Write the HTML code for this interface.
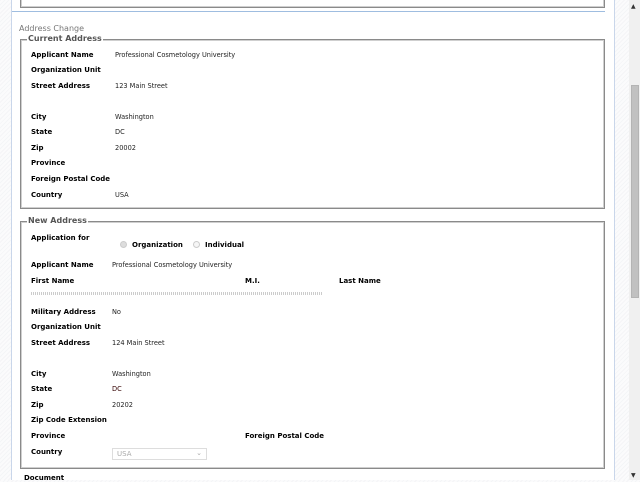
<!DOCTYPE html>
<html><head><style>
body{margin:0;width:640px;height:480px;overflow:hidden;position:relative;background:repeating-linear-gradient(135deg,#f4f5f7 0 1px,#fbfbfc 1px 3px);font-family:"DejaVu Sans","Liberation Sans",sans-serif;font-size:7px;color:#000}
.page{position:absolute;left:11px;top:0;width:602px;height:480px;background:#fff;border-left:1px solid #c9d6ea;border-right:1px solid #c9d6ea}
.sb{position:absolute;left:629px;top:0;width:11px;height:480px;background:#f0f0f0}
.thumb{position:absolute;left:631px;top:85px;width:8px;height:213px;background:#c1c1c1;border:1px solid #b4b4b4;box-sizing:border-box}
.a{position:absolute;white-space:nowrap;margin-top:1px}
.b{font-weight:bold}
.v{color:#222;font-size:6.6px}
.box{position:absolute;border:1px solid #8a8a8a;box-shadow:inset 0 0 0 1px #cfcfcf}
.lg{position:absolute;background:#fff;color:#555;font-weight:bold;font-size:8px;padding:0 1px;line-height:10px}
</style></head><body>
<div class="page"></div>
<div class="sb"></div><div class="thumb"></div>
<div class="a" style="left:631px;top:2px;font-size:6px;color:#333">▲</div>
<div class="a" style="left:631px;top:471px;font-size:6px;color:#333">▼</div>
<div class="box" style="left:20px;top:-5px;width:583px;height:11px"></div>
<div class="a" style="left:12px;top:10px;width:593px;height:1px;background:#9fbde0"></div>
<div class="a" style="left:19px;top:23px;color:#777;font-size:8px">Address Change</div>

<div class="box" style="left:20px;top:39px;width:583px;height:168px"></div>
<div class="lg" style="left:27px;top:34px">Current Address</div>
<div class="a b" style="left:31px;top:50px">Applicant Name</div><div class="a v" style="left:115px;top:50px">Professional Cosmetology University</div>
<div class="a b" style="left:31px;top:65px">Organization Unit</div>
<div class="a b" style="left:31px;top:81px">Street Address</div><div class="a v" style="left:115px;top:81px">123 Main Street</div>
<div class="a b" style="left:31px;top:112px">City</div><div class="a v" style="left:115px;top:112px">Washington</div>
<div class="a b" style="left:31px;top:127px">State</div><div class="a v" style="left:115px;top:127px">DC</div>
<div class="a b" style="left:31px;top:143px">Zip</div><div class="a v" style="left:115px;top:143px">20002</div>
<div class="a b" style="left:31px;top:158px">Province</div>
<div class="a b" style="left:31px;top:174px">Foreign Postal Code</div>
<div class="a b" style="left:31px;top:190px">Country</div><div class="a v" style="left:115px;top:190px">USA</div>

<div class="box" style="left:20px;top:221px;width:583px;height:246px"></div>
<div class="lg" style="left:27px;top:216px">New Address</div>
<div class="a b" style="left:31px;top:233px">Application for</div>
<div class="a" style="left:120px;top:240px;width:7px;height:7px;border-radius:50%;border:1px solid #ccc;background:#ddd;box-sizing:border-box"></div>
<div class="a b" style="left:132px;top:240px">Organization</div>
<div class="a" style="left:193px;top:240px;width:7px;height:7px;border-radius:50%;border:1px solid #ccc;background:#f6f6f6;box-sizing:border-box"></div>
<div class="a b" style="left:205px;top:240px">Individual</div>
<div class="a b" style="left:31px;top:260px">Applicant Name</div><div class="a v" style="left:112px;top:260px">Professional Cosmetology University</div>
<div class="a b" style="left:31px;top:276px">First Name</div>
<div class="a b" style="left:245px;top:276px">M.I.</div>
<div class="a b" style="left:339px;top:276px">Last Name</div>
<div class="a" style="left:31px;top:291px;width:292px;height:3px;background:repeating-linear-gradient(90deg,#ccc 0 1px,transparent 1px 2px)"></div>
<div class="a b" style="left:31px;top:307px">Military Address</div><div class="a v" style="left:112px;top:307px">No</div>
<div class="a b" style="left:31px;top:322px">Organization Unit</div>
<div class="a b" style="left:31px;top:338px">Street Address</div><div class="a v" style="left:112px;top:338px">124 Main Street</div>
<div class="a b" style="left:31px;top:369px">City</div><div class="a v" style="left:112px;top:369px">Washington</div>
<div class="a b" style="left:31px;top:384px">State</div><div class="a v" style="left:112px;top:384px;color:#300">DC</div>
<div class="a b" style="left:31px;top:400px">Zip</div><div class="a v" style="left:112px;top:400px">20202</div>
<div class="a b" style="left:31px;top:415px">Zip Code Extension</div>
<div class="a b" style="left:31px;top:431px">Province</div>
<div class="a b" style="left:245px;top:431px">Foreign Postal Code</div>
<div class="a b" style="left:31px;top:447px">Country</div>
<div class="a" style="left:112px;top:447px;width:95px;height:12px;border:1px solid #ddd;box-sizing:border-box;color:#aaa;padding:1px 4px;font-size:7px">USA<span style="position:absolute;right:4px;top:0">⌄</span></div>
<div class="a b" style="left:24px;top:473px">Document</div>
</body></html>
